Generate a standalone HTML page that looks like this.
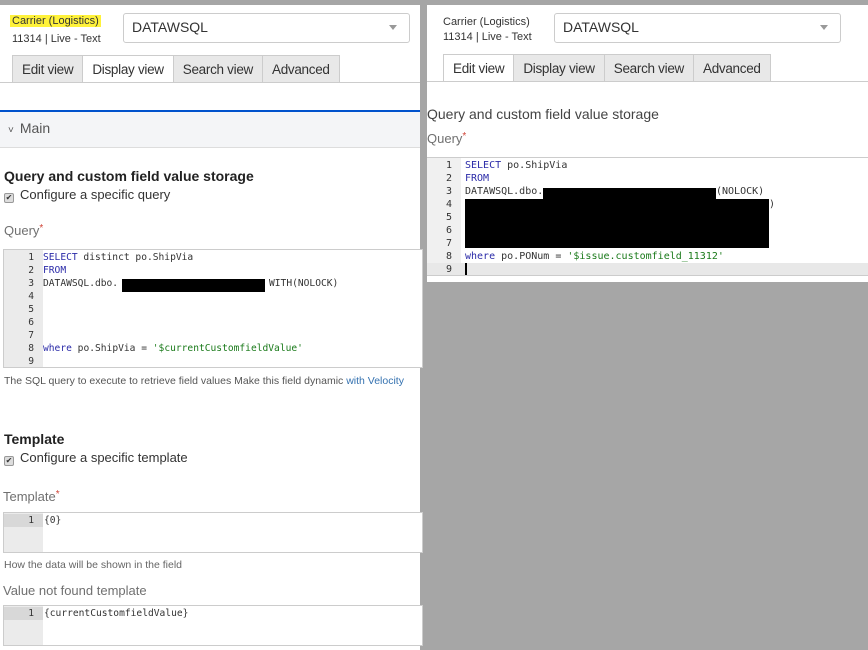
<!DOCTYPE html>
<html><head><meta charset="utf-8"><style>
*{margin:0;padding:0;box-sizing:border-box}
body{width:868px;height:650px;background:#a6a6a6;position:relative;overflow:hidden;font-family:"Liberation Sans",Arial,sans-serif;color:#333}
.p{position:absolute;background:#fff}
.a{position:absolute;white-space:nowrap}
.hl{background:#fff23a;padding:0 2px}
.sel{position:absolute;border:1px solid #ccc;border-radius:3px;font-size:14px;padding:5px 8px;color:#333}
.sel:after{content:"";position:absolute;right:12px;top:11px;border:4px solid transparent;border-top:5px solid #999}
.tabs{position:absolute;display:flex;font-size:13.5px}
.tab{background:#e8e8e8;border:1px solid #ccc;border-bottom:none;padding:6px 9px 6px 9px;margin-right:-1px;color:#333;letter-spacing:-0.3px}
.tab.on{background:#fff;height:28px}
.code{position:absolute;border:1px solid #ccc;font-family:"DejaVu Sans Mono","Liberation Mono",monospace;font-size:9.6px;background:#fff;overflow:hidden}
.gut{position:absolute;left:0;top:0;bottom:0;width:39px;background:#ebebeb}
.ln{position:relative;height:13px;line-height:13px;white-space:pre}
.ln b{display:inline-block;width:30px;text-align:right;font-weight:normal;color:#333;margin-right:9px}
.k{color:#2a2aa8}.s{color:#1a7a1a}
.blk{position:absolute;background:#000}
.lab{font-size:13px;color:#707070}
.req{color:#d04437;font-size:10px;vertical-align:top}
.cb{display:inline-block;width:10px;height:10px;border:1px solid #999;background:#ddd;border-radius:2px;vertical-align:-1px;margin-right:6px;font-size:8px;line-height:8px;text-align:center;color:#333}
</style></head><body>
<div class="p" style="left:0;top:5px;width:420px;height:645px">
<div class="a" style="left:10px;top:10px;font-size:11px"><span class="hl">Carrier (Logistics)</span></div>
<div class="a" style="left:12px;top:28px;font-size:11px">11314 | Live - Text</div>
<div class="sel" style="left:123px;top:8px;width:287px;height:30px">DATAWSQL</div>
<div class="tabs" style="left:12px;top:50px"><div class="tab">Edit view</div><div class="tab on">Display view</div><div class="tab">Search view</div><div class="tab">Advanced</div></div>
<div style="position:absolute;left:0;top:77px;width:420px;height:1px;background:#ccc"></div>
<div style="position:absolute;left:0;top:105px;width:420px;height:38px;background:#f4f5f7;border-top:2px solid #0052cc;border-bottom:1px solid #ddd"></div>
<div class="a" style="left:8px;top:115px;font-size:14px;color:#555"><span style="font-size:10px;margin-right:6px">˅</span>Main</div>
<div class="a" style="left:4px;top:163px;font-size:14px;font-weight:bold;color:#222">Query and custom field value storage</div>
<div class="a" style="left:4px;top:182px;font-size:13px"><span class="cb">✔</span>Configure a specific query</div>
<div class="a lab" style="left:4px;top:218px">Query<span class="req">*</span></div>
<div class="code" style="left:3px;top:244px;width:420px;height:119px"><div class="gut"></div><div style="padding-top:1px">
<div class="ln"><b>1</b><span class="k">SELECT</span> distinct po.ShipVia</div>
<div class="ln"><b>2</b><span class="k">FROM</span></div>
<div class="ln"><b>3</b>DATAWSQL.dbo.</div>
<div class="ln"><b>4</b></div><div class="ln"><b>5</b></div><div class="ln"><b>6</b></div><div class="ln"><b>7</b></div>
<div class="ln"><b>8</b><span class="k">where</span> po.ShipVia = <span class="s">'$currentCustomfieldValue'</span></div>
<div class="ln"><b>9</b></div></div>
<div class="a" style="left:265px;top:27px;line-height:13px">WITH(NOLOCK)</div>
<div class="blk" style="left:118px;top:29px;width:143px;height:13px"></div></div>
<div class="a" style="left:4px;top:370px;font-size:10.5px;color:#555">The SQL query to execute to retrieve field values Make this field dynamic <span style="color:#3572b0">with Velocity</span></div>
<div class="a" style="left:4px;top:426px;font-size:14px;font-weight:bold;color:#222">Template</div>
<div class="a" style="left:4px;top:445px;font-size:13px"><span class="cb">✔</span>Configure a specific template</div>
<div class="a lab" style="left:3px;top:484px">Template<span class="req">*</span></div>
<div class="code" style="left:3px;top:507px;width:420px;height:41px"><div class="gut"></div><div style="padding-top:1px"><div class="ln" style="background:#d8d8d8;width:39px"><b>1</b></div></div><div class="a" style="left:40px;top:1px;line-height:13px">{0}</div></div>
<div class="a" style="left:4px;top:554px;font-size:10.5px;color:#666">How the data will be shown in the field</div>
<div class="a lab" style="left:3px;top:578px">Value not found template</div>
<div class="code" style="left:3px;top:600px;width:420px;height:41px"><div class="gut"></div><div style="padding-top:1px"><div class="ln" style="background:#d8d8d8;width:39px"><b>1</b></div></div><div class="a" style="left:40px;top:1px;line-height:13px">{currentCustomfieldValue}</div></div>
</div>

<div class="p" style="left:427px;top:5px;width:441px;height:277px">
<div class="a" style="left:16px;top:11px;font-size:11px">Carrier (Logistics)</div>
<div class="a" style="left:16px;top:26px;font-size:11px">11314 | Live - Text</div>
<div class="sel" style="left:127px;top:8px;width:287px;height:30px">DATAWSQL</div>
<div class="tabs" style="left:16px;top:49px"><div class="tab on">Edit view</div><div class="tab">Display view</div><div class="tab">Search view</div><div class="tab">Advanced</div></div>
<div style="position:absolute;left:0;top:76px;width:441px;height:1px;background:#ccc"></div>
<div class="a" style="left:0;top:101px;font-size:14px;color:#444">Query and custom field value storage</div>
<div class="a lab" style="left:0;top:126px">Query<span class="req">*</span></div>
<div class="code" style="left:0;top:152px;width:441px;height:119px;border-left:none;border-right:none;font-size:10px"><div class="gut" style="left:0;width:34px;background:#f0f0f0"></div><div style="padding-top:1px">
<div class="ln"><b style="width:25px;margin-right:13px">1</b><span class="k">SELECT</span> po.ShipVia</div>
<div class="ln"><b style="width:25px;margin-right:13px">2</b><span class="k">FROM</span></div>
<div class="ln"><b style="width:25px;margin-right:13px">3</b>DATAWSQL.dbo.</div>
<div class="ln"><b style="width:25px;margin-right:13px">4</b></div>
<div class="ln"><b style="width:25px;margin-right:13px">5</b></div><div class="ln"><b style="width:25px;margin-right:13px">6</b></div><div class="ln"><b style="width:25px;margin-right:13px">7</b></div>
<div class="ln"><b style="width:25px;margin-right:13px">8</b><span class="k">where</span> po.PONum = <span class="s">'$issue.customfield_11312'</span></div>
<div class="ln" style="background:#e8e8e8"><b style="width:25px;margin-right:13px">9</b><span style="display:inline-block;width:2px;height:12px;background:#000;vertical-align:middle"></span></div></div>
<div class="a" style="left:289px;top:27px;line-height:13px">(NOLOCK)</div>
<div class="a" style="left:342px;top:40px;line-height:13px">)</div>
<div class="blk" style="left:116px;top:30px;width:173px;height:11px"></div>
<div class="blk" style="left:38px;top:41px;width:304px;height:49px"></div></div>
</div>
</body></html>
